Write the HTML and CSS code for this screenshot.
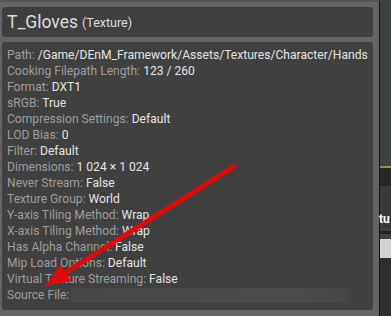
FILE: index.html
```html
<!DOCTYPE html>
<html lang="en">
<head>
    <meta charset="UTF-8">
    <title>T_Gloves</title>
    <link rel="stylesheet" href="styles.css">
</head>
<body>
    <div class="frame">
        <div class="title-panel">
            <span class="asset-name">T_Gloves</span>
            <span class="asset-type">(Texture)</span>
        </div>
        <div class="info-panel">
            <div class="row"><span class="label">Path:</span> <span class="value">/Game/DEnM_Framework/Assets/Textures/Character/Hands</span></div>
            <div class="row"><span class="label">Cooking Filepath Length:</span> <span class="value">123 / 260</span></div>
            <div class="row"><span class="label">Format:</span> <span class="value">DXT1</span></div>
            <div class="row"><span class="label">sRGB:</span> <span class="value">True</span></div>
            <div class="row"><span class="label">Compression Settings:</span> <span class="value">Default</span></div>
            <div class="row"><span class="label">LOD Bias:</span> <span class="value">0</span></div>
            <div class="row"><span class="label">Filter:</span> <span class="value">Default</span></div>
            <div class="row"><span class="label">Dimensions:</span> <span class="value">1 024 × 1 024</span></div>
            <div class="row"><span class="label">Never Stream:</span> <span class="value">False</span></div>
            <div class="row"><span class="label">Texture Group:</span> <span class="value">World</span></div>
            <div class="row"><span class="label">Y-axis Tiling Method:</span> <span class="value">Wrap</span></div>
            <div class="row"><span class="label">X-axis Tiling Method:</span> <span class="value">Wrap</span></div>
            <div class="row"><span class="label">Has Alpha Channel:</span> <span class="value">False</span></div>
            <div class="row"><span class="label">Mip Load Options:</span> <span class="value">Default</span></div>
            <div class="row"><span class="label">Virtual Texture Streaming:</span> <span class="value">False</span></div>
            <div class="row source"><span class="label">Source File:</span> <span class="blurred"></span></div>

            <!-- red annotation arrow drawn over the panel -->
            <svg class="arrow" width="372" height="268" viewBox="0 0 372 268">
                <line x1="231" y1="125" x2="63" y2="231" stroke="#e00a0a" stroke-width="5" stroke-linecap="round"/>
                <polygon points="43,244 58,223 69,239" fill="#e00a0a"/>
            </svg>
        </div>
    </div>
    <div class="side">
        <div class="side-top"></div>
        <div class="side-bar"></div>
        <div class="side-mid"><span class="side-text">tu</span></div>
        <div class="side-line"></div>
        <div class="side-box"></div>
        <div class="side-bottom"></div>
    </div>
</body>
</html>
```

FILE: styles.css
```css
body {
    margin: 0;
    padding: 0;
    width: 391px;
    height: 316px;
    overflow: hidden;
    display: flex;
    font-family: Roboto, "Open Sans", sans-serif;
    background-color: #3d4341;
}
.frame {
    width: 380px;
    height: 316px;
    box-sizing: border-box;
    background-color: #646464;
    border-top: 2px solid #555555;
    border-right: 1px solid #111111;
    padding: 5px 6px 0 2px;
    display: flex;
    flex-direction: column;
    gap: 5px;
}
.title-panel {
    height: 30px;
    background-color: #3f3f3f;
    border-radius: 3px;
    padding-left: 5px;
    display: flex;
    align-items: center;
    gap: 4px;
    color: #dddddd;
}
.asset-name {
    font-size: 17.5px;
}
.asset-type {
    font-size: 12.5px;
}
.info-panel {
    position: relative;
    height: 268px;
    box-sizing: border-box;
    background-color: #404040;
    border-radius: 3px;
    padding: 5px 0 0 5px;
    font-size: 12.1px;
    line-height: 16px;
}
.row {
    white-space: nowrap;
}
.label {
    color: #9e9e9e;
}
.value {
    color: #e4e4e4;
}
.source {
    display: flex;
    align-items: center;
}
.blurred {
    display: inline-block;
    width: 285px;
    height: 15px;
    margin-left: 2px;
    background: linear-gradient(to right, #484848, #4b4b4b 80%, #474747 95%, #404040);
}
.arrow {
    position: absolute;
    left: 0;
    top: 0;
}
.side {
    flex: 1;
    display: flex;
    flex-direction: column;
}
.side-top {
    height: 166px;
    background-color: #3d4341;
}
.side-bar {
    height: 2px;
    background-color: #a8853a;
}
.side-mid {
    height: 60px;
    background: linear-gradient(#262626 0, #262626 18px, #3a3a3a 18px);
    display: flex;
    align-items: flex-end;
    padding-bottom: 2px;
    box-sizing: border-box;
}
.side-text {
    color: #ffffff;
    font-size: 12px;
    font-weight: bold;
    margin-left: -1px;
}
.side-line {
    height: 3px;
    margin-top: 3px;
    background-color: #222222;
}
.side-box {
    height: 19px;
    margin-top: 5px;
    background-color: #d2d2d2;
}
.side-bottom {
    flex: 1;
    background-color: #2f2f2f;
}
```
